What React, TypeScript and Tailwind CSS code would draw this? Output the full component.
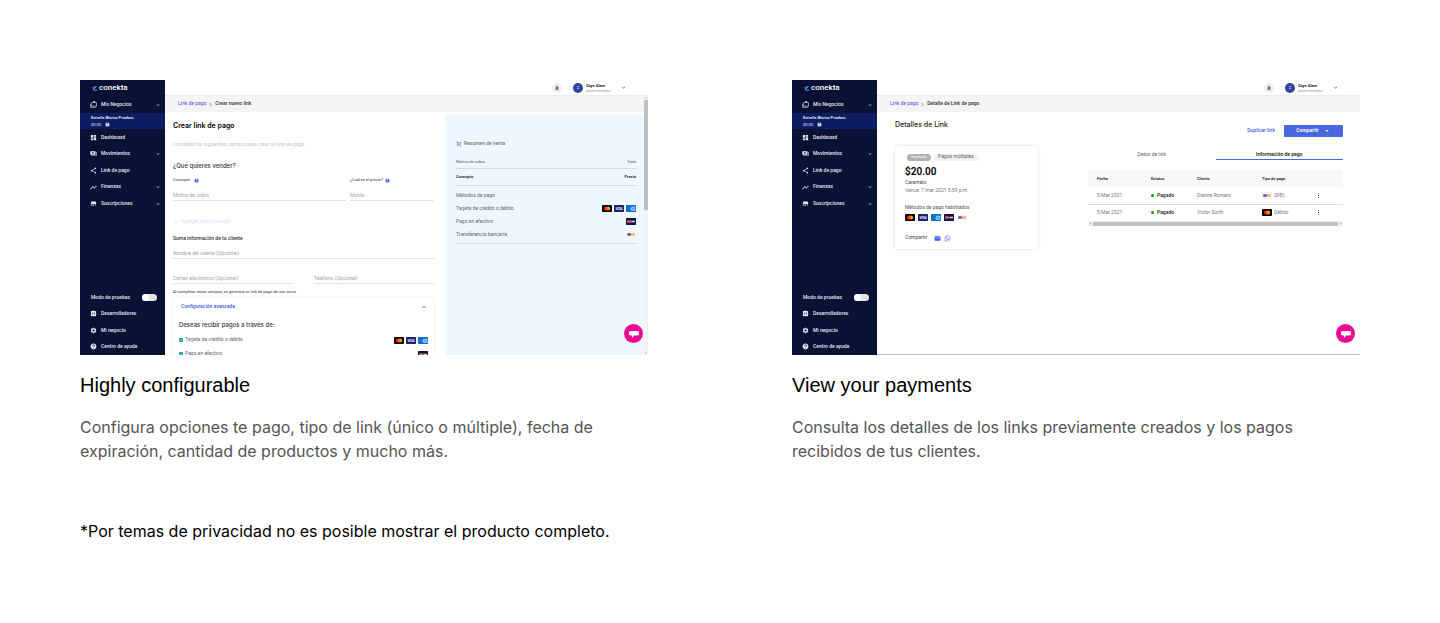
import type { ReactNode } from 'react';
import type { IconType } from 'react-icons';
import {
  MdAdd,
  MdArrowDropDown,
  MdArrowDropUp,
  MdArrowLeft,
  MdArrowRight,
  MdCheck,
  MdChevronRight,
  MdDashboard,
  MdEmail,
  MdExpandLess,
  MdExpandMore,
  MdHelp,
  MdIntegrationInstructions,
  MdMoreVert,
  MdNotifications,
  MdOutlineCases,
  MdOutlineShoppingCart,
  MdOutlineWhatsapp,
  MdPayments,
  MdSettings,
  MdShare,
  MdStore,
  MdTimeline,
} from 'react-icons/md';

type CardBrand = 'mastercard' | 'visa' | 'amex' | 'oxxo' | 'spei';

interface NavItem {
  label: string;
  icon: IconType;
  expandable?: boolean;
}

const mainNav: NavItem[] = [
  { label: 'Dashboard', icon: MdDashboard },
  { label: 'Movimientos', icon: MdPayments, expandable: true },
  { label: 'Link de pago', icon: MdShare },
  { label: 'Finanzas', icon: MdTimeline, expandable: true },
  { label: 'Suscripciones', icon: MdStore, expandable: true },
];

const footerNav: NavItem[] = [
  { label: 'Desarrolladores', icon: MdIntegrationInstructions },
  { label: 'Mi negocio', icon: MdSettings },
  { label: 'Centro de ayuda', icon: MdHelp },
];

const payments: { date: string; client: string; type: string; brand: CardBrand }[] = [
  { date: '5 Mar 2021', client: 'Dianne Romero', type: 'SPEI', brand: 'spei' },
  { date: '5 Mar 2021', client: 'Victor Surth', type: 'Débito', brand: 'mastercard' },
];

function BrandIcon({ brand }: { brand: CardBrand }) {
  return (
    <svg viewBox="0 0 30 21" className="h-[7px] w-[10px] shrink-0" aria-hidden="true">
      {brand === 'mastercard' && (
        <>
          <rect width="30" height="21" rx="2" fill="#050505" />
          <circle cx="11.5" cy="10.5" r="6" fill="#eb1c26" />
          <circle cx="18.5" cy="10.5" r="6" fill="#f79e1b" />
          <path d="M15 5.6a6 6 0 0 1 0 9.8 6 6 0 0 1 0-9.8z" fill="#ff5f00" />
        </>
      )}
      {brand === 'visa' && (
        <>
          <rect width="30" height="21" rx="2" fill="#1e1e70" />
          <text x="15" y="14" textAnchor="middle" fontSize="10" fontWeight="700" fontStyle="italic" fill="#fff">
            VISA
          </text>
        </>
      )}
      {brand === 'amex' && (
        <>
          <rect width="30" height="21" rx="2" fill="#0a6fd6" />
          <path d="M16 5h12v4l-2 2 2 2v4H16l-3-4z" fill="#9dcbf5" />
          <path d="M17 8l8 6M25 8l-8 6" stroke="#0a6fd6" strokeWidth="1.5" />
        </>
      )}
      {brand === 'oxxo' && (
        <>
          <rect width="30" height="21" rx="2" fill="#0d1440" />
          <rect x="3" y="7" width="12" height="7" fill="#e7604f" />
          <rect x="16" y="8" width="11" height="5" fill="#c9cbd8" />
        </>
      )}
      {brand === 'spei' && (
        <>
          <rect width="30" height="21" rx="2" fill="#f5f5f7" />
          <path d="M4 7h11l-1 7H4z" fill="#5a4fa8" />
          <path d="M16 7h4l-1 7h-4zM21 7h5v7h-6z" fill="#f5a63a" />
        </>
      )}
    </svg>
  );
}

function NavRow({ label, icon: Icon, expandable }: NavItem) {
  return (
    <a href="#" className="flex h-4 items-center pr-1 pl-2.5 text-[5px] font-medium text-[#e4e6ee]">
      <Icon className="mr-1 size-[7px] shrink-0" />
      <span className="flex-1">{label}</span>
      {expandable && <MdExpandMore className="size-1.5" />}
    </a>
  );
}

function Sidebar() {
  return (
    <aside className="flex w-[85px] shrink-0 flex-col bg-[#091235] text-[#e4e6ee]">
      <div className="flex h-4 items-center gap-px pl-3">
        <svg viewBox="0 0 12 14" className="h-[7px] w-1.5" aria-hidden="true">
          <path d="M9 3A5 5 0 0 0 5 11" fill="none" stroke="#1fb6d5" strokeWidth="3" />
          <path d="M2 4v3M3 9v2" stroke="#e0269a" strokeWidth="2.5" />
          <path d="M5 10a4 4 0 0 0 5 0" fill="none" stroke="#3d6be0" strokeWidth="2.5" />
        </svg>
        <span className="text-[8px] leading-none font-medium text-white">conekta</span>
      </div>
      <div className="flex h-[17px] items-center">
        <div className="w-full">
          <NavRow label="Mis Negocios" icon={MdOutlineCases} expandable />
        </div>
      </div>
      <div className="flex h-4 flex-col justify-center bg-[#0d1d62] pl-[11px]">
        <p className="text-[4px] leading-[7px] font-semibold">Estrella Blanca Pruebas</p>
        <p className="flex items-center gap-1 text-[4px] leading-[7px]">
          $0.00 <MdHelp className="size-[5px]" />
        </p>
      </div>
      <nav className="flex h-[84px] flex-col justify-around border-b border-[#060d29]">
        {mainNav.map((item) => (
          <NavRow key={item.label} {...item} />
        ))}
      </nav>
      <div className="mt-auto flex h-[66px] flex-col justify-around">
        <label className="flex h-4 items-center justify-between pr-2 pl-[11px] text-[5px] font-medium">
          Modo de pruebas
          <input
            type="checkbox"
            role="switch"
            className="h-[7px] w-[15px] appearance-none rounded-full bg-[#e2e2e2] before:block before:size-[7px] before:rounded-full before:bg-white"
          />
        </label>
        {footerNav.map((item) => (
          <NavRow key={item.label} {...item} />
        ))}
      </div>
    </aside>
  );
}

function TopBar() {
  return (
    <header className="flex h-4 items-center justify-end border-b border-[#ececec] bg-white pr-[21px]">
      <button
        type="button"
        aria-label="Notificaciones"
        className="flex size-2.5 items-center justify-center rounded-full bg-[#efefef] text-[#777]"
      >
        <MdNotifications className="size-1.5" />
      </button>
      <span className="ml-[11px] flex size-2.5 items-center justify-center rounded-full bg-[#2f479f] text-[4px] text-white">Z</span>
      <div className="ml-[3px] w-[34px]">
        <p className="text-[4px] leading-[5px] font-bold text-[#222]">Zayn Alam</p>
        <p className="text-[4px] leading-[5px] text-[#999]">Administrador</p>
      </div>
      <MdExpandMore className="size-[7px] text-[#777]" />
    </header>
  );
}

function Breadcrumb({ current }: { current: string }) {
  return (
    <nav className="flex h-4 items-center bg-[#f4f4f4] pl-[13px] text-[5px]">
      <a href="#" className="text-[#5648e8]">
        Link de pago
      </a>
      <MdChevronRight className="mx-px size-[7px] text-[#888]" />
      <span className="font-medium text-[#333]">{current}</span>
    </nav>
  );
}

function ChatButton() {
  return (
    <button
      type="button"
      aria-label="Abrir chat"
      className="absolute right-[5px] bottom-3 flex size-[19px] items-center justify-center rounded-full bg-[#eb0a93]"
    >
      <svg viewBox="0 0 20 20" className="size-2.5" aria-hidden="true">
        <path d="M4 4h12a4 4 0 0 1 0 9H10l-4 5v-5H4A4 4 0 0 1 4 4z" fill="#fff" />
      </svg>
    </button>
  );
}

function Field({ id, placeholder, className }: { id: string; placeholder: string; className?: string }) {
  return (
    <div className={className}>
      <input
        id={id}
        aria-label={placeholder}
        placeholder={placeholder}
        className="block h-3 w-full border-b border-[#e2e2e2] text-[5px] placeholder:text-[#a3a3a3]"
      />
    </div>
  );
}

function CheckRow({ label, children }: { label: string; children: ReactNode }) {
  return (
    <div className="flex h-3.5 items-center justify-between px-1.5">
      <label className="flex items-center gap-0.5 text-[5px] text-[#666]">
        <span className="relative flex">
          <input type="checkbox" defaultChecked className="size-1 appearance-none rounded-[1px] bg-[#12a5a8]" />
          <MdCheck className="absolute inset-0 size-1 text-white" />
        </span>
        {label}
      </label>
      <span className="flex gap-0.5">{children}</span>
    </div>
  );
}

function LinkForm() {
  return (
    <form className="flex-1 pt-[9px] pr-[11px] pl-2 text-[#333]">
      <h3 className="font-['Inter',sans-serif] text-[7px] leading-[10px] font-semibold text-black">Crear link de pago</h3>
      <p className="mt-2 text-[5px] leading-[10px] text-[#c4c4c4]">Completa los siguientes campos para crear un link de pago</p>
      <h4 className="mt-3 font-['Inter',sans-serif] text-[6px] leading-[10px] font-medium">¿Qué quieres vender?</h4>
      <div className="mt-1 flex gap-1">
        <div className="w-[173px]">
          <label htmlFor="concept" className="flex h-2.5 items-center gap-1 text-[4px]">
            Concepto <MdHelp className="size-[5px] text-[#4a5fe0]" />
          </label>
          <Field id="concept" placeholder="Motivo de cobro" className="mt-1" />
        </div>
        <div className="flex-1">
          <label htmlFor="price" className="flex h-2.5 items-center gap-0.5 text-[4px]">
            ¿Cuál es el precio? <MdHelp className="size-[5px] text-[#4a5fe0]" />
          </label>
          <Field id="price" placeholder="Monto" className="mt-1" />
        </div>
      </div>
      <button type="button" className="mt-4 flex h-2.5 items-center gap-0.5 text-[5px] text-[#d9dcf8]">
        <MdAdd className="size-1.5" /> Agregar otro producto
      </button>
      <h4 className="mt-1.5 text-[5px] leading-[10px] font-medium">Suma información de tu cliente</h4>
      <Field id="name" placeholder="Nombre del cliente (Opcional)" className="mt-1" />
      <div className="mt-[13px] flex gap-[21px]">
        <Field id="email" placeholder="Correo electrónico (Opcional)" className="w-[120px]" />
        <Field id="phone" placeholder="Teléfono (Opcional)" className="flex-1" />
      </div>
      <p className="mt-[3px] text-[4px] leading-[10px]">Al completar estos campos, se generará un link de pago de uso único</p>
      <div className="mt-px rounded-sm shadow-[0_0_3px_rgba(0,0,0,0.12)]">
        <button
          type="button"
          className="flex h-[18px] w-full items-center justify-between pr-1.5 pl-2 text-[5px] font-medium text-[#3f5be0]"
        >
          Configuración avanzada <MdExpandLess className="size-2" />
        </button>
        <h4 className="mt-1 mb-[3px] pl-1.5 font-['Inter',sans-serif] text-[6px] leading-[10px] font-medium">
          Deseas recibir pagos a través de:
        </h4>
        <CheckRow label="Tarjeta de crédito o débito">
          <BrandIcon brand="mastercard" />
          <BrandIcon brand="visa" />
          <BrandIcon brand="amex" />
        </CheckRow>
        <CheckRow label="Pago en efectivo">
          <BrandIcon brand="oxxo" />
        </CheckRow>
      </div>
    </form>
  );
}

function SummaryRow({ label, children, className }: { label: string; children?: ReactNode; className?: string }) {
  return (
    <div className={`flex items-center justify-between ${className ?? 'h-[13px] text-[5px] text-[#666]'}`}>
      <span>{label}</span>
      <span className="flex gap-0.5">{children}</span>
    </div>
  );
}

function SaleSummary() {
  return (
    <section className="mt-[3px] w-[199px] shrink-0 bg-[#eef7ff] pt-6 pr-2 pl-[11px]">
      <h4 className="flex h-2.5 items-center gap-0.5 text-[5px] font-medium text-[#777]">
        <MdOutlineShoppingCart className="size-1.5 text-[#5666e0]" />
        Resumen de venta
      </h4>
      <SummaryRow label="Motivo de cobro" className="mt-1.5 h-3.5 border-b border-[#d3dce6] text-[4px] text-[#555]">
        Total
      </SummaryRow>
      <SummaryRow label="Concepto" className="h-[17px] border-b border-[#d3dce6] text-[4px] font-bold text-[#333]">
        Precio
      </SummaryRow>
      <div className="border-b border-[#d3dce6] pt-[3px] pb-0.5">
        <SummaryRow label="Métodos de pago" />
        <SummaryRow label="Tarjeta de crédito o débito">
          <BrandIcon brand="mastercard" />
          <BrandIcon brand="visa" />
          <BrandIcon brand="amex" />
        </SummaryRow>
        <SummaryRow label="Pago en efectivo">
          <BrandIcon brand="oxxo" />
        </SummaryRow>
        <SummaryRow label="Transferencia bancaria">
          <BrandIcon brand="spei" />
        </SummaryRow>
      </div>
    </section>
  );
}

function CreateLinkScreen() {
  return (
    <div className="flex min-h-0 flex-1">
      <div className="min-w-0 flex-1">
        <Breadcrumb current="Crear nuevo link" />
        <div className="flex h-full">
          <LinkForm />
          <SaleSummary />
        </div>
      </div>
      <div className="flex w-1 flex-col items-center justify-between bg-[#f1f1f1] text-[#555]">
        <div className="w-full">
          <MdArrowDropUp className="size-1" />
          <div className="h-[110px] w-full bg-[#c1c1c1]" />
        </div>
        <MdArrowDropDown className="size-1" />
      </div>
    </div>
  );
}

function LinkCard() {
  return (
    <article className="mt-4 w-[143px] rounded-[2px] px-2.5 pt-1.5 pb-1 text-[5px] shadow-[0_0_3px_rgba(0,0,0,0.16)]">
      <div className="flex h-2.5 items-center gap-[3px] pl-0.5 text-[#666]">
        <span className="flex h-[7px] w-6 items-center justify-center rounded-full bg-[#b0b0b0] text-[4px] text-white">Expirado</span>
        <span className="flex h-[7px] items-center rounded-full bg-[#f1f1f1] px-1">Pagos múltiples</span>
      </div>
      <p className="mt-1 text-[10px] leading-3 font-semibold text-black">$20.00</p>
      <p className="leading-2 text-[#444]">Caramelo</p>
      <p className="leading-2 text-[#777]">Vence: 7 mar 2021 5:59 p.m.</p>
      <p className="mt-2 leading-[10px] text-[#555]">Métodos de pago habilitados</p>
      <div className="mt-0.5 flex gap-[3px]">
        <BrandIcon brand="mastercard" />
        <BrandIcon brand="visa" />
        <BrandIcon brand="amex" />
        <BrandIcon brand="oxxo" />
        <BrandIcon brand="spei" />
      </div>
      <div className="mt-2.5 flex h-3.5 items-center gap-[3px] text-[#444]">
        <span className="mr-1">Compartir</span>
        <MdEmail className="size-[7px] text-[#3f5be0]" />
        <MdOutlineWhatsapp className="size-[7px] text-[#3f5be0]" />
      </div>
    </article>
  );
}

function PaymentsTable() {
  return (
    <div className="mt-2.5">
      <table className="w-full table-fixed text-left text-[5px] text-[#777]">
        <thead className="bg-[#f7f7f7] text-[4px] text-[#333]">
          <tr className="h-[17px]">
            <th className="w-[63px] pl-[9px] font-bold">Fecha</th>
            <th className="w-[46px] font-bold">Estatus</th>
            <th className="w-[65px] font-bold">Cliente</th>
            <th className="w-[53px] font-bold">Tipo de pago</th>
            <th aria-label="Acciones" />
          </tr>
        </thead>
        <tbody>
          {payments.map((payment) => (
            <tr key={payment.client} className="h-[17px] border-b border-[#dedede] last:border-0">
              <td className="pl-[9px]">{payment.date}</td>
              <td>
                <span className="flex items-center gap-[3px] font-semibold text-[#333]">
                  <span className="size-[3px] rounded-full bg-[#0aa10a]" />
                  Pagado
                </span>
              </td>
              <td>{payment.client}</td>
              <td>
                <span className="flex items-center gap-0.5">
                  <BrandIcon brand={payment.brand} />
                  {payment.type}
                </span>
              </td>
              <td>
                <button type="button" aria-label="Más opciones" className="block text-[#333]">
                  <MdMoreVert className="size-[7px]" />
                </button>
              </td>
            </tr>
          ))}
        </tbody>
      </table>
      <div className="flex h-[5px] items-center bg-[#f1f1f1] text-[#888]">
        <MdArrowLeft className="size-[5px]" />
        <div className="h-1 flex-1 bg-[#c1c1c1]" />
        <MdArrowRight className="size-[5px]" />
      </div>
    </div>
  );
}

function LinkDetailsScreen() {
  return (
    <>
      <Breadcrumb current="Detalle de Link de pago" />
      <div className="flex flex-1 justify-between border-b border-[#bdbdbd] pr-[17px] pl-[18px]">
        <div className="pt-2">
          <h3 className="font-['Inter',sans-serif] text-[7px] leading-[10px] font-medium text-[#222]">Detalles de Link</h3>
          <LinkCard />
        </div>
        <div className="w-[255px] pt-[13px]">
          <div className="flex items-center justify-end gap-[9px]">
            <a href="#" className="text-[5px] font-medium text-[#4560e0]">
              Duplicar link
            </a>
            <button
              type="button"
              className="flex h-3 w-[59px] items-center justify-center gap-1 rounded-[1px] bg-[#4a66e0] text-[5px] font-semibold text-white"
            >
              Compartir <MdArrowDropDown className="size-2" />
            </button>
          </div>
          <div className="mt-3 flex text-[5px] leading-[10px]">
            <button type="button" className="h-[11px] flex-1 border-b border-transparent text-[#666]">
              Datos de link
            </button>
            <button type="button" className="h-[11px] flex-1 border-b border-[#4a66e0] font-semibold text-[#222]">
              Información de pago
            </button>
          </div>
          <PaymentsTable />
        </div>
      </div>
    </>
  );
}

function DashboardFrame({ children }: { children: ReactNode }) {
  return (
    <div className="relative flex h-[275px] overflow-hidden bg-white font-['Roboto',sans-serif]">
      <Sidebar />
      <div className="flex min-w-0 flex-1 flex-col">
        <TopBar />
        {children}
      </div>
      <ChatButton />
    </div>
  );
}

function Feature({ title, description, children }: { title: string; description: string; children: ReactNode }) {
  return (
    <article>
      <DashboardFrame>{children}</DashboardFrame>
      <h2 className="mt-4 font-['Liberation_Sans',sans-serif] text-xl leading-7 text-black">{title}</h2>
      <p className="mt-4 leading-6 text-[#555]">{description}</p>
    </article>
  );
}

export default function App() {
  return (
    <main className="bg-white p-20 font-['Inter',sans-serif] text-base">
      <div className="grid grid-cols-2 gap-36">
        <Feature
          title="Highly configurable"
          description="Configura opciones te pago, tipo de link (único o múltiple), fecha de expiración, cantidad de productos y mucho más."
        >
          <CreateLinkScreen />
        </Feature>
        <Feature
          title="View your payments"
          description="Consulta los detalles de los links previamente creados y los pagos recibidos de tus clientes."
        >
          <LinkDetailsScreen />
        </Feature>
      </div>
      <p className="mt-14 leading-6 text-black">*Por temas de privacidad no es posible mostrar el producto completo.</p>
    </main>
  );
}
